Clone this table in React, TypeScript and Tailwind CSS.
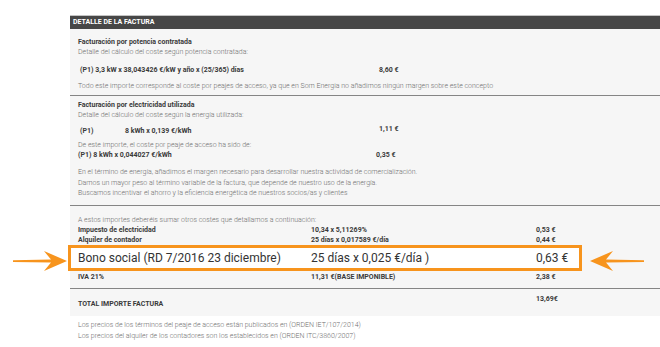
function Arrow({ flip }: { flip?: boolean }) {
  return (
    <svg
      width="54"
      height="22"
      viewBox="0 0 54 22"
      className={flip ? "-scale-x-100" : ""}
      aria-hidden
    >
      <path
        d="M0 10.2 L38 9.6 L31 1 L54 11 L31 21 L38 12.6 L0 12 Z"
        fill="#f7941d"
      />
    </svg>
  );
}

const small = "text-[7px] leading-[10.5px] font-light text-[#6f6f6f]";
const label = "text-[7px] leading-[10px] font-bold text-[#3a3a3a]";

export default function App() {
  return (
    <div className="min-h-screen bg-white font-['Roboto',sans-serif]">
      <div className="pt-[15px] pl-[70px]">
        <div className="bg-[#f6f6f6]">
          {/* header bar */}
          <div className="h-[14px] border-t border-[#c4c4c4] bg-[#474747] pl-[3px] text-[7px] font-bold leading-[13px] text-white">
            DETALLE DE LA FACTURA
          </div>

          {/* potencia */}
          <div className="border-b border-[#858585] px-[8px] pt-[8px] pb-[4px]">
            <p className={label}>Facturación por potencia contratada</p>
            <p className={small}>Detalle del cálculo del coste según potencia contratada:</p>
            <div className="mt-[7px] grid grid-cols-[299px_1fr] pl-[2px]">
              <span className={label}>(P1) 3,3 kW x 38,043426 €/kW y año x (25/365) días</span>
              <span className={label}>8,60 €</span>
            </div>
            <p className={`${small} mt-[6px]`}>
              Todo este importe corresponde al coste por peajes de acceso, ya que en Som Energia no añadimos ningún margen sobre este concepto
            </p>
          </div>

          {/* energia */}
          <div className="border-b border-[#858585] px-[8px] pt-[4px] pb-[6px]">
            <p className={label}>Facturación por electricidad utilizada</p>
            <p className={small}>Detalle del cálculo del coste según la energía utilizada:</p>
            <div className="mt-[5px] grid grid-cols-[299px_1fr] pl-[2px]">
              <span className="flex">
                <span className={`${label} w-[45px]`}>(P1)</span>
                <span className={label}>8 kWh x 0,139 €/kWh</span>
              </span>
              <span className={`${label} -mt-[2px]`}>1,11 €</span>
            </div>
            <p className={`${small} mt-[4px]`}>De este importe, el coste por peaje de acceso ha sido de:</p>
            <div className="grid grid-cols-[298px_1fr]">
              <span className={label}>(P1) 8 kWh x 0,044027 €/kWh</span>
              <span className={label}>0,35 €</span>
            </div>
            <div className="mt-[7px]">
              <p className={small}>En el término de energía, añadimos el margen necesario para desarrollar nuestra actividad de comercialización.</p>
              <p className={small}>Damos un mayor peso al término variable de la factura, que depende de nuestro uso de la energía.</p>
              <p className={small}>Buscamos incentivar el ahorro y la eficiencia energética de nuestros socios/as y clientes</p>
            </div>
          </div>

          {/* otros costes */}
          <div className="border-b border-[#858585] pt-[9px] pb-[6px]">
            <p className={`${small} px-[8px]`}>A estos importes deberéis sumar otros costes que detallamos a continuación:</p>
            <div className="grid grid-cols-[233px_225px_1fr] px-[8px]">
              <span className={`${label} leading-[9px]`}>Impuesto de electricidad</span>
              <span className={`${label} leading-[9px]`}>10,34 x 5,11269%</span>
              <span className={`${label} leading-[9px]`}>0,53 €</span>
              <span className={`${label} leading-[9px]`}>Alquiler de contador</span>
              <span className={`${label} leading-[9px]`}>25 días x 0,017589 €/día</span>
              <span className={`${label} leading-[9px]`}>0,44 €</span>
            </div>

            {/* highlighted row */}
            <div className="relative -ml-[2px] w-[514px] border-[3px] border-[#f7941d] bg-white py-[3px] pl-[7px]">
              <div className="grid grid-cols-[233px_225px_1fr] text-[12px] leading-[14px] text-[#333]">
                <span>Bono social (RD 7/2016 23 diciembre)</span>
                <span>25 días x 0,025 €/día )</span>
                <span>0,63 €</span>
              </div>
              <div className="absolute top-[2px] -left-[58px]">
                <Arrow />
              </div>
              <div className="absolute top-[2px] -right-[65px]">
                <Arrow flip />
              </div>
            </div>

            <div className="mt-[1px] grid grid-cols-[233px_225px_1fr] px-[8px]">
              <span className={label}>IVA 21%</span>
              <span className={label}>11,31 €(BASE IMPONIBLE)</span>
              <span className={label}>2,38 €</span>
            </div>
          </div>

          {/* total */}
          <div className="grid h-[27px] grid-cols-[458px_1fr] px-[8px]">
            <span className={`${label} self-end pb-[7px]`}>TOTAL IMPORTE FACTURA</span>
            <span className={`${label} pt-[5px]`}>13,69€</span>
          </div>
        </div>

        {/* footer */}
        <div className="px-[8px] pt-[4px]">
          <p className={small}>Los precios de los términos del peaje de acceso están publicados en (ORDEN IET/107/2014)</p>
          <p className={small}>Los precios del alquiler de los contadores son los establecidos en (ORDEN ITC/3860/2007)</p>
        </div>
      </div>
    </div>
  );
}
